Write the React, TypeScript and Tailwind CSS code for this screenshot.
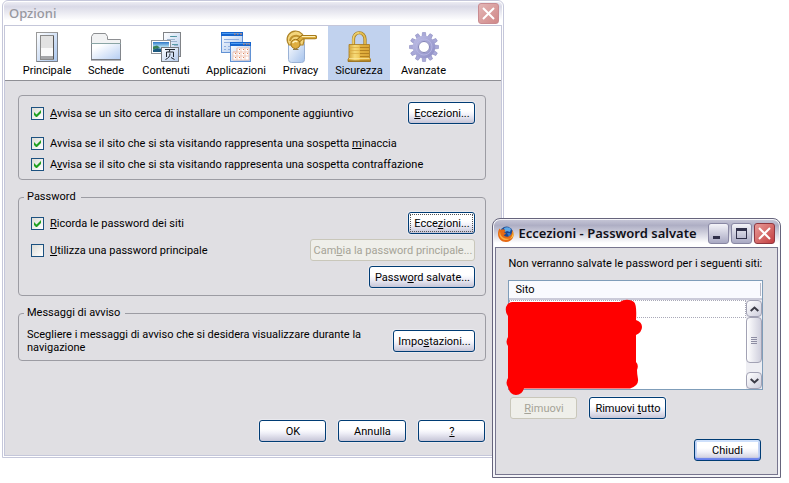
import { useState } from 'react'
import type { ReactNode } from 'react'
import clsx from 'clsx'

const UI_FONT = "font-['Roboto','Liberation_Sans',sans-serif]"
const TITLE_FONT = "font-['Noto_Sans','Open_Sans',sans-serif]"

/* ---------- icone ---------- */

function SwitchIcon() {
  return (
    <svg width="32" height="32" viewBox="0 0 32 32" aria-hidden="true">
      <defs>
        <linearGradient id="sw" x1="0" y1="0" x2="1" y2="1">
          <stop offset="0" stopColor="#ffffff" />
          <stop offset="1" stopColor="#a9c6ee" />
        </linearGradient>
      </defs>
      <rect x="5.500" y="1.500" width="21" height="29" fill="url(#sw)" stroke="#9a9a9a" />
      <path d="M6 30.500H26.500V2" fill="none" stroke="#7b8088" />
      <rect x="9.500" y="4.500" width="13" height="24" fill="#e9e9e9" stroke="#8a8a8a" />
      <path d="M10 5h12v12H10z" fill="#e2e2e2" />
      <path d="M10 17h12v8H10z" fill="#fafafa" />
      <path d="M10 25h12v3H10z" fill="#a5a6a9" />
      <path d="M22.500 5v23" stroke="#555" />
    </svg>
  )
}

function FolderIcon() {
  return (
    <svg width="32" height="32" viewBox="0 0 32 32" aria-hidden="true">
      <defs>
        <linearGradient id="fo" x1="0" y1="0" x2="1" y2="1">
          <stop offset="0.200" stopColor="#ffffff" />
          <stop offset="1" stopColor="#b4cdf3" />
        </linearGradient>
      </defs>
      <path d="M1.500 12.500V5.500L3.500 2.500H15.500L17.500 5.500V8.500H30.500V12.500z" fill="#f1f2f3" stroke="#8d8f92" />
      <rect x="1.500" y="12.500" width="29" height="16" fill="url(#fo)" stroke="#82868c" />
      <path d="M1 12.500h30" stroke="#8aa5a5" />
      <path d="M1 29h30" stroke="#6d7178" />
    </svg>
  )
}

function ContentIcon() {
  return (
    <svg width="32" height="32" viewBox="0 0 32 32" aria-hidden="true">
      <defs>
        <linearGradient id="co" x1="0" y1="0" x2="1" y2="1">
          <stop offset="0" stopColor="#ffffff" />
          <stop offset="1" stopColor="#b3caec" />
        </linearGradient>
        <linearGradient id="sky" x1="0" y1="0" x2="0" y2="1">
          <stop offset="0" stopColor="#2d78c8" />
          <stop offset="0.500" stopColor="#b9e4f5" />
          <stop offset="1" stopColor="#2a6f9d" />
        </linearGradient>
      </defs>
      <rect x="13.500" y="1.500" width="17" height="24" fill="url(#co)" stroke="#808387" />
      <path d="M21 5.500h4M17 8.500h8M20 10.500h7M24 14.500h4" stroke="#9db4cf" />
      <path d="M20 5.500h7M22 13.500h6" stroke="#3a8a96" strokeWidth="0.800" />
      <rect x="1.500" y="9.500" width="19" height="13" fill="#fff" stroke="#909499" />
      <rect x="3" y="11" width="16" height="10" fill="url(#sky)" />
      <path d="M3 19l4-2 4 1 8-1v4H3z" fill="#1d5a80" />
      <path d="M3 15.500l4-1 3 2-7 2z" fill="#3a8157" />
      <rect x="11.500" y="16.500" width="17" height="14" fill="url(#co)" stroke="#777b81" />
      {/* ideogramma stilizzato */}
      <path d="M15 18.500h10M20 18.500l-1 2.500M16.500 26v-5h7v5M20 22.500c0 3-1.500 4.500-4.500 6M21 26.500l3.500 2" fill="none" stroke="#22272e" />
    </svg>
  )
}

function AppsIcon() {
  return (
    <svg width="32" height="32" viewBox="0 0 32 32" aria-hidden="true">
      <defs>
        <linearGradient id="ap" x1="0" y1="0" x2="1" y2="1">
          <stop offset="0" stopColor="#ffffff" />
          <stop offset="1" stopColor="#a6c3ec" />
        </linearGradient>
      </defs>
      <rect x="1.500" y="1.500" width="21" height="20" fill="url(#ap)" stroke="#6292d4" />
      <path d="M1 1h22v4H1z" fill="#1464cf" />
      <path d="M2 2h20v1H2z" fill="#4d9cf2" />
      <path d="M14 3h1.500M17 3h1.500M20 3h2" stroke="#f28a4b" strokeWidth="1.200" />
      <path d="M4 8.500h11M4 11.500h14M4 15.500h2M8 15.500h2M4 18.500h2M8 18.500h2M15 8.500h4" stroke="#90aee0" />
      <rect x="10.500" y="11.500" width="20" height="19" fill="url(#ap)" stroke="#6292d4" />
      <path d="M10 11h21v4H10z" fill="#1464cf" />
      <path d="M11 12h19v1H11z" fill="#4d9cf2" />
      <path d="M23 13h1.500M26 13h1.500M28.500 13h1.500" stroke="#f28a4b" strokeWidth="1.200" />
      <path d="M17 17h12v12H13V21h4z" fill="#fff" stroke="#e8b9a6" strokeWidth="0.700" />
      <path d="M17 17v12M21 17v12M25 17v12M13 21h16M13 25h16" stroke="#edc0ae" strokeWidth="0.800" />
      <path d="M19 18.500h1M23 18.500h1M27 18.500h1M15 22.500h1M19 22.500h1M23 22.500h1M27 22.500h1M15 26.500h1M19 26.500h1M23 26.500h1" stroke="#e08358" />
    </svg>
  )
}

function PrivacyIcon() {
  return (
    <svg width="32" height="34" viewBox="0 0 32 34" aria-hidden="true">
      <defs>
        <linearGradient id="pv" x1="0" y1="0" x2="1" y2="1">
          <stop offset="0" stopColor="#ffffff" />
          <stop offset="1" stopColor="#a5c2ec" />
        </linearGradient>
        <linearGradient id="gold" x1="0" y1="0" x2="1" y2="1">
          <stop offset="0" stopColor="#fbe9a0" />
          <stop offset="0.500" stopColor="#dfae3c" />
          <stop offset="1" stopColor="#a87a1c" />
        </linearGradient>
      </defs>
      <rect x="3.500" y="10.500" width="16" height="22" rx="3" fill="url(#pv)" stroke="#9ab2d6" />
      <path d="M2.500 12a8.500 8.500 0 1 1 16.500-1l-1 4H4z" fill="#f3d57c" stroke="#b08628" strokeWidth="1.200" />
      <path d="M5 11a6.200 6 0 0 1 11-3" fill="none" stroke="#c0922e" strokeWidth="2" />
      <path d="M11 13l6-5.800h13" fill="none" stroke="#94690f" strokeWidth="4.200" strokeLinejoin="round" strokeLinecap="round" />
      <path d="M11 13l6-5.800h13" fill="none" stroke="#dcae42" strokeWidth="2.800" strokeLinejoin="round" strokeLinecap="round" />
      <path d="M17 6.500h13" stroke="#fdf0b8" />
      <circle cx="10.500" cy="14" r="4.600" fill="#dfae40" stroke="#94690f" strokeWidth="0.900" />
      <path d="M7.500 13q2.500-3 5-1" fill="none" stroke="#fff3bd" strokeWidth="1.300" />
      <path d="M8 19.500h5.500" stroke="#8b7a4c" />
    </svg>
  )
}

function LockIcon() {
  return (
    <svg width="32" height="34" viewBox="0 0 32 34" aria-hidden="true">
      <defs>
        <linearGradient id="lk" x1="0" y1="0" x2="1" y2="0">
          <stop offset="0" stopColor="#cf9f33" />
          <stop offset="0.300" stopColor="#f6da78" />
          <stop offset="0.480" stopColor="#f0cc60" />
          <stop offset="0.550" stopColor="#e3b240" />
          <stop offset="1" stopColor="#d8a436" />
        </linearGradient>
      </defs>
      <path d="M10.500 17V9a5.500 6 0 0 1 11.500 0V17" fill="none" stroke="#a07a20" strokeWidth="3.200" />
      <path d="M10.500 17V9a5.500 6 0 0 1 11.500 0V17" fill="none" stroke="#e3bc50" strokeWidth="1.800" />
      <path d="M10 17V9a5.500 6 0 0 1 6-6.200" fill="none" stroke="#f8e694" strokeWidth="0.800" />
      <path d="M6 14.500h20.500v13.500l1 1v2.500H5V29l1-1z" fill="url(#lk)" stroke="#a87a1c" strokeWidth="0.800" />
      <path d="M17 17.500h9M17 20.500h9M17 23.500h9M17 26.500h9" stroke="#b07d1e" strokeWidth="0.900" />
      <path d="M6.500 17.500H17M6.500 20.500H17M6.500 23.500H17" stroke="#d9aa45" strokeWidth="0.700" />
      <path d="M6 28.500h20.500" stroke="#fbe79a" strokeWidth="0.800" />
      <path d="M5 31h22.500" stroke="#8a6416" />
    </svg>
  )
}

const TEETH = [0, 30, 60, 90, 120, 150, 180, 210, 240, 270, 300, 330]

function GearIcon() {
  return (
    <svg width="32" height="32" viewBox="0 0 32 32" aria-hidden="true">
      <defs>
        <linearGradient id="gr" x1="0" y1="0" x2="1" y2="1">
          <stop offset="0" stopColor="#b9b9e2" />
          <stop offset="1" stopColor="#9292c8" />
        </linearGradient>
      </defs>
      {TEETH.map((a) => (
        <path
          key={a}
          d="M14 6l.5-4.500h3L18 6z"
          fill="#a9a9d8"
          stroke="#8c8cc0"
          strokeWidth="0.600"
          transform={`rotate(${a} 16 16)`}
        />
      ))}
      <circle cx="16" cy="16" r="8.500" fill="none" stroke="url(#gr)" strokeWidth="5.500" />
      <circle cx="16" cy="16" r="8" fill="none" stroke="#b9b9e4" strokeWidth="0.800" />
      <circle cx="16" cy="16" r="5.500" fill="#fff" stroke="#8080b6" />
    </svg>
  )
}

function FirefoxIcon() {
  return (
    <svg width="16" height="16" viewBox="0 0 16 16" aria-hidden="true">
      <circle cx="8.500" cy="7" r="6.500" fill="#1d4a94" />
      <path d="M6 2q4-2 7 1l-1 3-3-1-2 1z" fill="#5fa9e6" />
      <path d="M9 7l3 0 1 2-2 2z" fill="#377dca" />
      <path d="M1.500 2.500L3 4q1.500-1 3-.5L7.500 5 6 6.500l2 .5-1 1.500-1.500.5q2 2.500 5 1.500T14 6l.5-2q1.500 3 1 6c-1 4-4 6-7.500 6-4.500 0-8-3.500-8-8 0-2 .5-4 1.500-5.500z" fill="#e66a14" />
      <path d="M2 5q-2 6 3 8.500 4 1.500 7-1-4 1-7-1T2 5z" fill="#fbb040" />
      <path d="M14.500 5q1 3-1 6l-2 2q4-1 4-5z" fill="#f9d24a" />
    </svg>
  )
}

function CrossIcon() {
  return (
    <svg width="13" height="13" viewBox="0 0 13 13" aria-hidden="true">
      <path d="M1 1l11 11M12 1L1 12" stroke="#fff" strokeWidth="2" />
    </svg>
  )
}

function Chevron({ down = false }: { down?: boolean }) {
  return (
    <svg width="9" height="6" viewBox="0 0 9 6" aria-hidden="true">
      <path d={down ? 'M.7 1l3.800 3.500L8.300 1' : 'M.7 5l3.800-3.500L8.300 5'} fill="none" stroke="#3b3b46" strokeWidth="2" />
    </svg>
  )
}

/* ---------- controlli ---------- */

type XpButtonProps = {
  children: ReactNode
  className?: string
  disabled?: boolean
  focused?: boolean
  primary?: boolean
}

function XpButton({ children, className, disabled, focused, primary }: XpButtonProps) {
  return (
    <button
      type="button"
      disabled={disabled}
      className={clsx(
        'h-[22px] shrink-0 rounded-[3px] border p-px whitespace-nowrap',
        disabled
          ? 'border-[#c9c7ba] bg-[#efefea] text-[#a5a397]'
          : 'border-[#003c74] bg-linear-to-b from-white from-40% via-[#f0f0f8] via-60% to-[#c6c5d7]',
        primary && 'shadow-[inset_0_-2px_1px_#6982ee,inset_0_2px_0_#cee0fb,inset_2px_0_0_#c4d5f5,inset_-2px_0_0_#c4d5f5]',
        !disabled && !primary && 'shadow-[0_0_0_1px_#e9e9ee]',
        className,
      )}
    >
      <span
        className={clsx(
          'flex h-full items-center justify-center',
          focused && 'border border-dotted border-[#555]',
        )}
      >
        <span>{children}</span>
      </span>
    </button>
  )
}

function CheckRow({ children, defaultChecked = false }: { children: ReactNode; defaultChecked?: boolean }) {
  return (
    <label className="flex items-center gap-1.5">
      <span className="relative size-[13px] shrink-0">
        <input
          type="checkbox"
          defaultChecked={defaultChecked}
          className="peer block size-[13px] appearance-none border border-[#1c5180] bg-linear-to-br from-[#dcdcd7] to-white"
        />
        <svg className="pointer-events-none absolute inset-0 hidden peer-checked:block" width="13" height="13" viewBox="0 0 13 13">
          <path d="M3 5v3l2 2h1l4-4V3L5.500 7.500z" fill="#21a121" />
        </svg>
      </span>
      <span>{children}</span>
    </label>
  )
}

function Group({ legend, children, className }: { legend?: string; children: ReactNode; className?: string }) {
  return (
    <fieldset className={clsx('min-w-0 rounded border border-[#9c9ca3]', className)}>
      {legend && <legend className="ml-[5px] pr-[5px] pl-[3px] leading-[14px]">{legend}</legend>}
      {children}
    </fieldset>
  )
}

/* ---------- finestre ---------- */

const TABS = [
  { label: 'Principale', icon: <SwitchIcon />, width: 'w-16' },
  { label: 'Schede', icon: <FolderIcon />, width: 'w-[54px]' },
  { label: 'Contenuti', icon: <ContentIcon />, width: 'w-[66px]' },
  { label: 'Applicazioni', icon: <AppsIcon />, width: 'w-[74px]' },
  { label: 'Privacy', icon: <PrivacyIcon />, width: 'w-[55px]' },
  { label: 'Sicurezza', icon: <LockIcon />, width: 'w-[62px]' },
  { label: 'Avanzate', icon: <GearIcon />, width: 'w-[67px]' },
]

function OptionsWindow() {
  const [active, setActive] = useState('Sicurezza')

  return (
    <section className="min-w-0 flex-[501_1_0%] self-start rounded-t-md border border-[#c5c7da] bg-white p-px">
      <header className="flex h-[23px] items-center justify-between rounded-t bg-linear-to-b from-[#ececf3] via-[#dadae7] via-20% to-white to-80% pr-[3px] pl-[5px]">
        <h1 className={clsx('text-[13px] font-medium text-[#97979f]', TITLE_FONT)}>Opzioni</h1>
        <button
          type="button"
          aria-label="Chiudi finestra"
          className="grid size-[21px] place-items-center rounded-[3px] border border-[#c98b91] bg-linear-to-br from-[#e3b6b6] to-[#d08888]"
        >
          <CrossIcon />
        </button>
      </header>

      <div className="border border-[#c5c7da] bg-[#e0dfe3]">
        <nav className="flex h-[55px] border-b border-[#8f8f95] bg-white pl-2.5">
          {TABS.map((tab) => (
            <button
              key={tab.label}
              type="button"
              onClick={() => setActive(tab.label)}
              className={clsx(
                'flex flex-col items-center pt-1',
                tab.width,
                active === tab.label && 'bg-[#c1d2ee]',
              )}
            >
              <span className="flex h-[34px] items-center">{tab.icon}</span>
              <span className="leading-[14px]">{tab.label}</span>
            </button>
          ))}
        </nav>

        <div className="pt-3.5 pr-[15px] pb-[13px] pl-[13px]">
          <Group className="pt-1.5 pr-2.5 pb-2 pl-3">
            <div className="flex h-[22px] items-center justify-between">
              <CheckRow defaultChecked><u>A</u>vvisa se un sito cerca di installare un componente aggiuntivo</CheckRow>
              <XpButton className="w-[67px]"><u>E</u>ccezioni...</XpButton>
            </div>
            <div className="flex flex-col gap-2 pt-[13px]">
              <CheckRow defaultChecked>Avvisa se il sito che si sta visitando rappresenta una sospetta <u>m</u>inaccia</CheckRow>
              <CheckRow defaultChecked>A<u>v</u>visa se il sito che si sta visitando rappresenta una sospetta contraffazione</CheckRow>
            </div>
          </Group>

          <Group legend="Password" className="mt-2.5 pb-[7px]">
            <div className="flex flex-col gap-[5px] pt-2 pr-2.5 pl-3">
              <div className="flex h-[22px] items-center justify-between">
                <CheckRow defaultChecked><u>R</u>icorda le password dei siti</CheckRow>
                <XpButton focused className="w-[67px]">Ecce<u>z</u>ioni...</XpButton>
              </div>
              <div className="flex h-[22px] items-center justify-between">
                <CheckRow><u>U</u>tilizza una password principale</CheckRow>
                <XpButton disabled className="w-[165px]">Cam<u>b</u>ia la password principale...</XpButton>
              </div>
              <XpButton className="w-[106px] self-end">Passw<u>o</u>rd salvate...</XpButton>
            </div>
          </Group>

          <Group legend="Messaggi di avviso" className="mt-2.5 pb-1.5">
            <div className="flex items-center justify-between pt-2 pr-2.5 pl-2">
              <p className="w-[340px]">Scegliere i messaggi di avviso che si desidera visualizzare durante la navigazione</p>
              <XpButton className="w-[82px]">Impo<u>s</u>tazioni...</XpButton>
            </div>
          </Group>

          <footer className="mt-[59px] flex justify-end gap-3 pr-px">
            <XpButton className="w-[67px]">OK</XpButton>
            <XpButton className="w-[68px]">Annulla</XpButton>
            <XpButton className="w-[67px]"><u>?</u></XpButton>
          </footer>
        </div>
      </div>
    </section>
  )
}

function SiteList() {
  return (
    <div className="relative mt-[9px] flex h-[110px] flex-col border border-[#7f9db9] bg-white">
      <table className="w-full border-collapse text-left">
        <thead>
          <tr className="h-[18px] border-b-2 border-[#cbcbd9] bg-[#f9fafe]">
            <th className="pr-px pl-1.5 font-normal">
              <span className="block border-r border-[#b9b9c6]">Sito</span>
            </th>
          </tr>
        </thead>
      </table>
      <div className="flex min-h-0 flex-1">
        <div className="flex-1">
          <div className="h-[18px] border border-dotted border-[#a9a9b8]" />
        </div>
        <div className="flex w-4 flex-col bg-[#eeeef3]">
          <button type="button" aria-label="Su" className="grid h-[17px] place-items-center rounded-sm border border-[#a2a2b4] bg-linear-to-br from-white to-[#cfcfdd]">
            <Chevron />
          </button>
          <div className="flex h-[46px] flex-col items-center justify-center gap-px rounded-sm border border-[#a2a2b4] bg-linear-to-r from-white to-[#cfcfdd]">
            <i className="h-px w-1.5 bg-[#8d8da3]" />
            <i className="h-px w-1.5 bg-[#8d8da3]" />
            <i className="h-px w-1.5 bg-[#8d8da3]" />
            <i className="h-px w-1.5 bg-[#8d8da3]" />
          </div>
          <button type="button" aria-label="Giù" className="mt-auto grid h-[17px] place-items-center rounded-sm border border-[#a2a2b4] bg-linear-to-br from-white to-[#cfcfdd]">
            <Chevron down />
          </button>
        </div>
      </div>

      {/* siti coperti a pennarello */}
      <svg className="absolute top-[18px] -left-1" width="138" height="98" viewBox="0 0 138 98" aria-hidden="true">
        <path
          d="M7 3H115C119 0 125 0 129 3Q132 6 131 21Q137 23 137 28Q137 33 131 36V63Q134 66 132 71Q132 75 133 80Q134 87 125 89.500H19Q17 96 11 96Q5 96 3 88Q0 84 3 79V47Q0 43 3 38V17Q0 14 1 8Q3 3 7 3z"
          fill="#ff0000"
        />
      </svg>
    </div>
  )
}

function ExceptionsWindow() {
  const caption = 'grid size-[21px] place-items-center rounded-[3px] border'

  return (
    <section className="relative mt-[218px] min-w-0 flex-1 self-start rounded-t-lg border border-[#66647c] bg-[#f4f4f8] p-0.5">
      <header className="-mx-px -mt-px flex h-[27px] items-center rounded-t-md bg-linear-to-b from-[#c4c4d5] via-[#aeaec4] via-20% to-white to-85% pr-1 pl-1">
        <FirefoxIcon />
        <h2 className={clsx('ml-1 text-[13px] font-semibold whitespace-nowrap text-[#101018]', TITLE_FONT)}>
          Eccezioni - Password salvate
        </h2>
        <div className="ml-auto flex gap-0.5">
          <button type="button" aria-label="Riduci a icona" className={clsx(caption, 'border-[#8988a4] bg-linear-to-b from-[#f4f4f9] to-[#a9a9c3]')}>
            <span className="mt-2 mr-1 h-[3px] w-[7px] bg-[#30304a]" />
          </button>
          <button type="button" aria-label="Ingrandisci" className={clsx(caption, 'border-[#8988a4] bg-linear-to-b from-[#f4f4f9] to-[#a9a9c3]')}>
            <span className="size-[11px] border border-t-[3px] border-[#30304a]" />
          </button>
          <button type="button" aria-label="Chiudi finestra" className={clsx(caption, 'border-[#8f3740] bg-linear-to-br from-[#e79a98] to-[#c23a40]')}>
            <CrossIcon />
          </button>
        </div>
      </header>

      <div className="border border-[#77758e] bg-[#e0dfe3] pt-[9px] pr-3.5 pb-[13px] pl-3">
        <p className="leading-[14px] whitespace-nowrap">Non verranno salvate le password per i seguenti siti:</p>
        <SiteList />
        <div className="mt-[7px] ml-0.5 flex gap-3">
          <XpButton disabled className="w-[67px]"><u>R</u>imuovi</XpButton>
          <XpButton className="w-[77px]">Rimuovi <u>t</u>utto</XpButton>
        </div>
        <div className="mt-5 mr-0.5 flex justify-end">
          <XpButton primary className="w-[67px]">Chiudi</XpButton>
        </div>
      </div>
    </section>
  )
}

export default function App() {
  return (
    <main className={clsx('flex min-h-screen bg-white pr-2 pl-0.5 text-[11px] leading-[13px] text-black', UI_FONT)}>
      <OptionsWindow />
      {/* la seconda finestra copre in parte il bordo della prima */}
      <div className="-ml-3 flex min-w-0 flex-[290_1_0%]">
        <ExceptionsWindow />
      </div>
    </main>
  )
}
